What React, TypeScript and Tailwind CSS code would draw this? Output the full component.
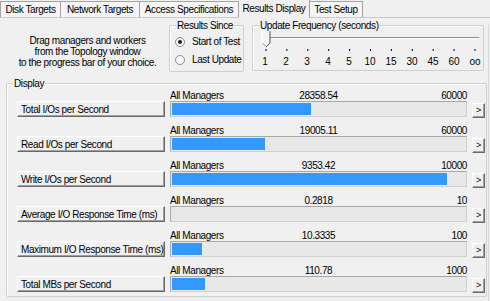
import React from "react";

type Row = { name: string; value: string; max: string; fill: number };

const rows: Row[] = [
  { name: "Total I/Os per Second", value: "28358.54", max: "60000", fill: 47.3 },
  { name: "Read I/Os per Second", value: "19005.11", max: "60000", fill: 31.7 },
  { name: "Write I/Os per Second", value: "9353.42", max: "10000", fill: 93.5 },
  { name: "Average I/O Response Time (ms)", value: "0.2818", max: "10", fill: 0 },
  { name: "Maximum I/O Response Time (ms)", value: "10.3335", max: "100", fill: 10.3 },
  { name: "Total MBs per Second", value: "110.78", max: "1000", fill: 11.1 },
];

const tabs = [
  { label: "Disk Targets", w: "w-[61px]" },
  { label: "Network Targets", w: "w-[79px]" },
  { label: "Access Specifications", w: "w-[99px]" },
  { label: "Results Display", w: "w-[71px]", active: true },
  { label: "Test Setup", w: "w-[53px]" },
];

const ticks = ["1", "2", "3", "4", "5", "10", "15", "30", "45", "60", "oo"];

const btn3d =
  "border border-t-white border-l-white border-r-[#696969] border-b-[#696969] shadow-[inset_-1px_-1px_0_#a0a0a0] bg-[#f0f0f0]";

const Group = ({
  title,
  className,
  children,
}: {
  title: string;
  className: string;
  children?: React.ReactNode;
}) => (
  <div
    className={`relative rounded-[2px] border border-[#cfcfcf] shadow-[inset_1px_1px_0_#fff] ${className}`}
  >
    <span className="absolute -top-[6px] left-[6px] bg-[#f0f0f0] px-[1px] leading-[11px]">
      {title}
    </span>
    {children}
  </div>
);

const Radio = ({ label, checked }: { label: string; checked?: boolean }) => (
  <div className="flex h-[12px] items-center gap-[7px]">
    <span className="flex h-[10px] w-[10px] items-center justify-center rounded-full border border-[#8e8f8f] bg-[#f6f6f6]">
      {checked && <span className="h-[4px] w-[4px] rounded-full bg-[#1e1e1e]" />}
    </span>
    <span className="leading-[12px]">{label}</span>
  </div>
);

const App = () => {
  return (
    <div className="h-[301px] w-[490px] overflow-hidden bg-[#f0f0f0] font-['Liberation_Sans',Arial,sans-serif] text-[10px] leading-[11px] tracking-[-0.4px] text-black">
      {/* tab strip */}
      <div className="flex h-[18px] items-end border-b border-[#c9c9c9]">
        {tabs.map((t, i) =>
          t.active ? (
            <div
              key={t.label}
              className={`${t.w} -mb-px flex h-[19px] items-center justify-center border-r border-t border-[#a3a3a3] bg-[#f0f0f0] pb-[2px]`}
            >
              {t.label}
            </div>
          ) : (
            <div
              key={t.label}
              className={`${t.w} flex h-[16px] items-center justify-center border-r border-t border-[#a3a3a3] bg-[#f5f5f5] ${
                i === 0 ? "border-l" : ""
              }`}
            >
              {t.label}
            </div>
          )
        )}
      </div>

      <div className="w-[489px] border-r border-[#d9d9d9] pb-[4px]">
        {/* top section */}
        <div className="mt-[7px] flex items-start pl-[6px]">
          <div className="w-[163px] pt-[10px] text-center">
            <div>Drag managers and workers</div>
            <div>from the Topology window</div>
            <div>to the progress bar of your choice.</div>
          </div>

          <Group title="Results Since" className="h-[47px] w-[75px]">
            <div className="flex flex-col gap-[6px] pl-[5px] pt-[10px]">
              <Radio label="Start of Test" checked />
              <Radio label="Last Update" />
            </div>
          </Group>

          <Group title="Update Frequency (seconds)" className="ml-[8px] h-[46px] w-[232px]">
            <svg width="230" height="22" className="mt-[4px] block">
              <line x1="13" y1="7.5" x2="226" y2="7.5" stroke="#8c8c8c" />
              <line x1="13" y1="8.5" x2="226" y2="8.5" stroke="#ffffff" />
              <polygon points="9,1 17,1 17,13 13,17 9,13" fill="#f4f4f4" />
              <polyline points="9,13 9,1 17,1" fill="none" stroke="#ffffff" />
              <polyline points="17,1 17,13 13,17" fill="none" stroke="#555555" />
              <line x1="9.5" y1="13" x2="13" y2="16.5" stroke="#a0a0a0" />
              {ticks.map((_, i) => (
                <rect key={i} x={12.5 + i * 20.9} y="19" width="1" height="2" fill="#000" />
              ))}
            </svg>
            <div className="mt-[4px] ml-[5px] mr-px flex justify-between">
              {ticks.map((t) => (
                <span key={t} className="w-[14px] text-center tracking-normal">
                  {t}
                </span>
              ))}
            </div>
          </Group>
        </div>

        {/* display */}
        <Group title="Display" className="ml-[6px] mt-[11px] h-[214px] w-[481px]">
          <div className="flex flex-col gap-[8px] pl-[10px] pt-[6px]">
            {rows.map((r) => (
              <div
                key={r.name}
                className="grid grid-cols-[148px_297px_13px] grid-rows-[11px_16px] gap-x-[5px]"
              >
                <div />
                <div className="grid h-[11px] grid-cols-[1fr_auto_1fr]">
                  <span>All Managers</span>
                  <span>{r.value}</span>
                  <span className="text-right">{r.max}</span>
                </div>
                <div />
                <div className={`flex h-[16px] items-center pl-[3px] ${btn3d}`}>{r.name}</div>
                <div className="h-[16px] border border-[#d0d0d0] border-l-[#a8a8a8] border-t-[#a8a8a8] bg-[#e8e8e8] py-px pl-px">
                  <div className="h-full bg-[#3399ff]" style={{ width: `${r.fill}%` }} />
                </div>
                <div
                  className={`mt-[2px] flex h-[15px] items-center justify-center text-[9px] ${btn3d}`}
                >
                  &gt;
                </div>
              </div>
            ))}
          </div>
        </Group>
      </div>
    </div>
  );
};

export default App;
